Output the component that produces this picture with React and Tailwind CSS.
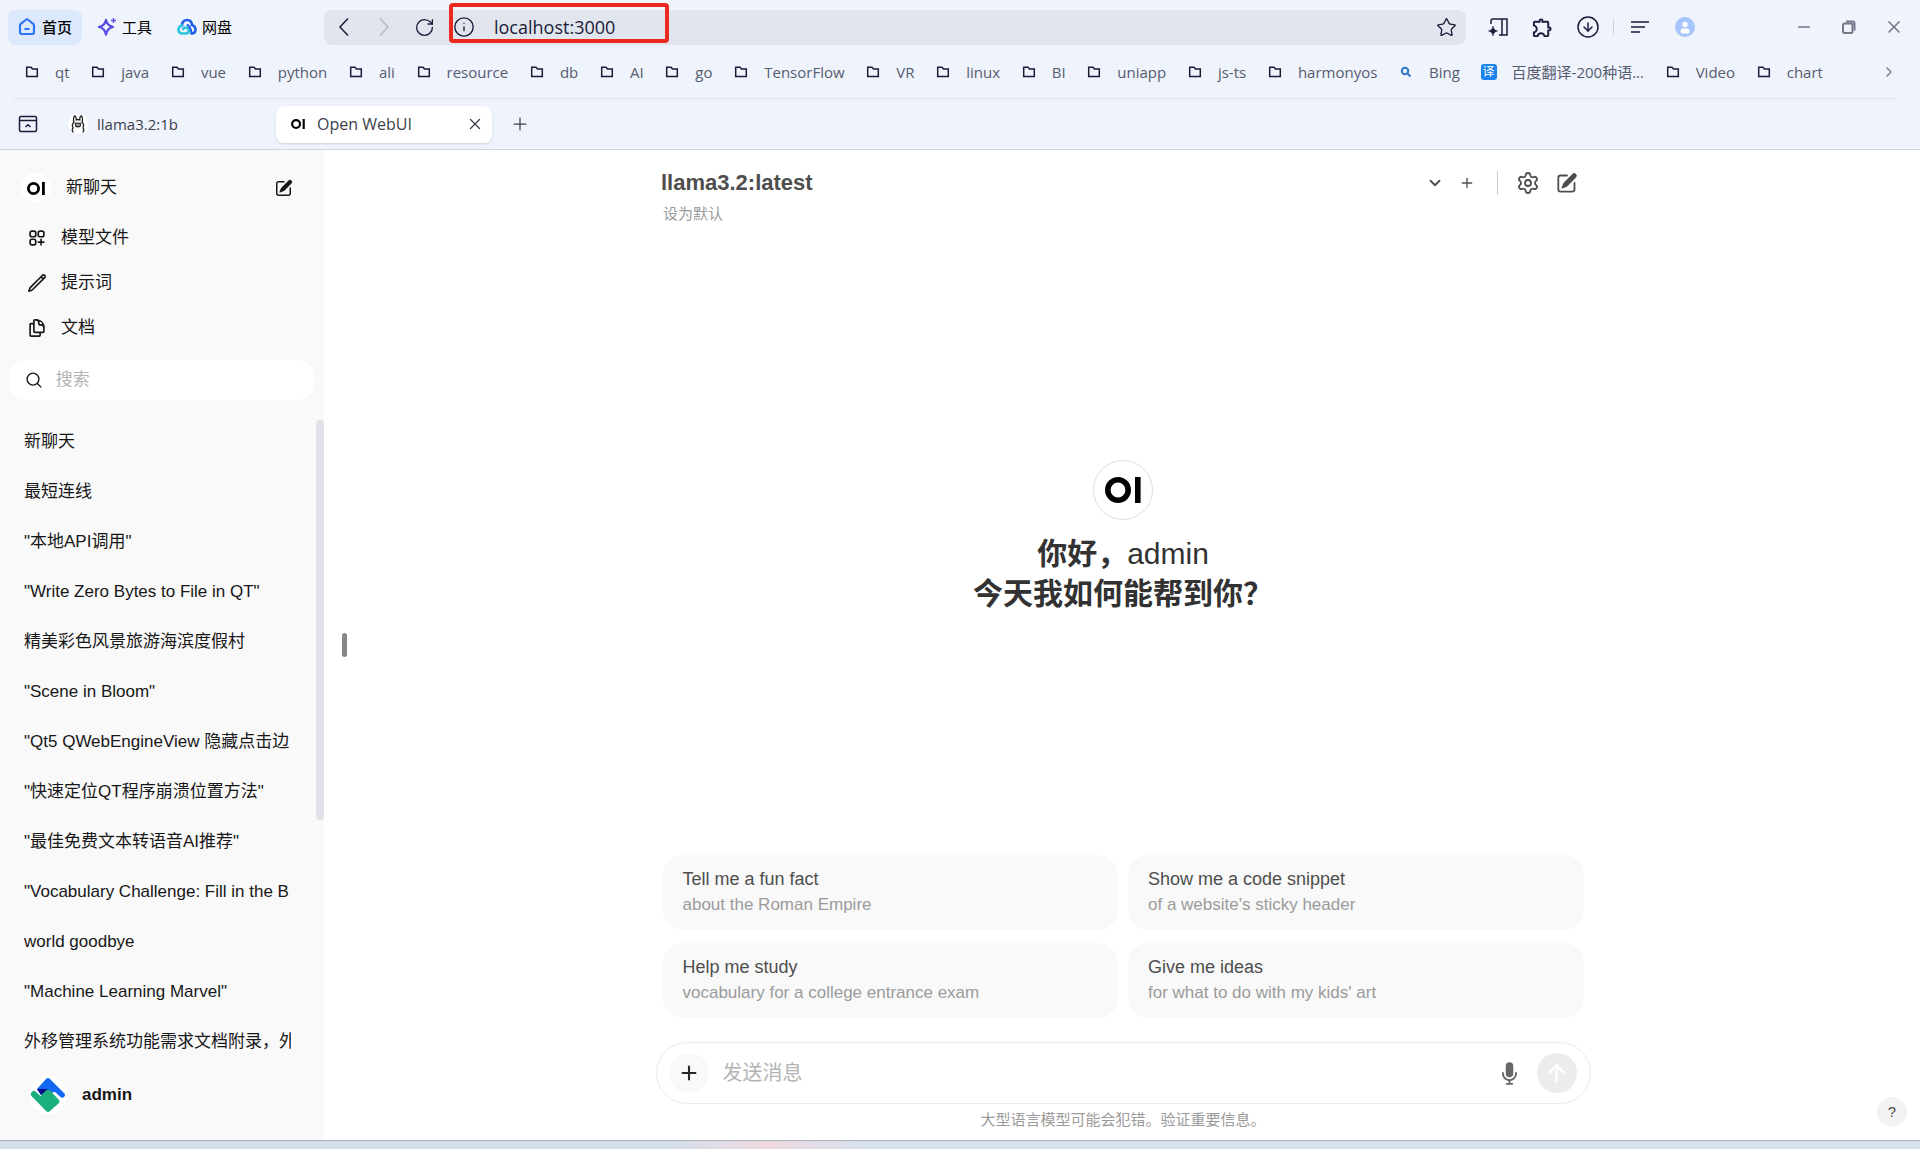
import { useState } from 'react';
import {
  ChevronDown, ChevronRight, CircleArrowDown, Info, Minus, Plus, RotateCw, Settings, Star, X,
} from 'lucide-react';
import { HiOutlineDocumentDuplicate, HiOutlinePencil, HiOutlineSquaresPlus } from 'react-icons/hi2';
import { MdOutlineExtension } from 'react-icons/md';

const bookmarks = [
  { label: 'qt' },
  { label: 'java' },
  { label: 'vue' },
  { label: 'python' },
  { label: 'ali' },
  { label: 'resource' },
  { label: 'db' },
  { label: 'AI' },
  { label: 'go' },
  { label: 'TensorFlow' },
  { label: 'VR' },
  { label: 'linux' },
  { label: 'BI' },
  { label: 'uniapp' },
  { label: 'js-ts' },
  { label: 'harmonyos' },
  { label: 'Bing', icon: 'search' },
  { label: '百度翻译-200种语...', icon: 'translate' },
  { label: 'Video' },
  { label: 'chart' },
];

const navItems = [
  { label: '模型文件', Icon: HiOutlineSquaresPlus },
  { label: '提示词', Icon: HiOutlinePencil },
  { label: '文档', Icon: HiOutlineDocumentDuplicate },
];

const chats = [
  '新聊天',
  '最短连线',
  '"本地API调用"',
  '"Write Zero Bytes to File in QT"',
  '精美彩色风景旅游海滨度假村',
  '"Scene in Bloom"',
  '"Qt5 QWebEngineView 隐藏点击边',
  '"快速定位QT程序崩溃位置方法"',
  '"最佳免费文本转语音AI推荐"',
  '"Vocabulary Challenge: Fill in the B',
  'world goodbye',
  '"Machine Learning Marvel"',
  '外移管理系统功能需求文档附录，外',
];

const suggestions = [
  { title: 'Tell me a fun fact', text: 'about the Roman Empire' },
  { title: 'Show me a code snippet', text: "of a website's sticky header" },
  { title: 'Help me study', text: 'vocabulary for a college entrance exam' },
  { title: 'Give me ideas', text: "for what to do with my kids' art" },
];

function LogoMark({ className }) {
  return (
    <svg viewBox="0 0 36 26" className={className} aria-hidden="true">
      <circle cx="13" cy="13" r="10.2" fill="none" stroke="#000" strokeWidth="5.6" />
      <rect x="30" y="0" width="5.6" height="26" fill="#000" />
    </svg>
  );
}

function EditIcon({ className }) {
  return (
    <svg viewBox="0 0 20 20" fill="currentColor" className={className} aria-hidden="true">
      <path d="m5.433 13.917 1.262-3.155A4 4 0 0 1 7.58 9.42l6.92-6.918a2.121 2.121 0 0 1 3 3l-6.92 6.918c-.383.383-.84.685-1.343.886l-3.154 1.262a.5.5 0 0 1-.65-.65Z" />
      <path d="M3.5 5.75c0-.69.56-1.25 1.25-1.25H10A.75.75 0 0 0 10 3H4.75A2.75 2.75 0 0 0 2 5.75v9.5A2.75 2.75 0 0 0 4.75 18h9.5A2.75 2.75 0 0 0 17 15.25V10a.75.75 0 0 0-1.5 0v5.25c0 .69-.56 1.25-1.25 1.25h-9.5c-.69 0-1.25-.56-1.25-1.25v-9.5Z" />
    </svg>
  );
}

function HomeIcon() {
  return (
    <svg viewBox="0 0 18 18" className="size-[18px]" aria-hidden="true">
      <path d="M7.6 2 2.8 5.8A2 2 0 0 0 2 7.4V14a2 2 0 0 0 2 2h10a2 2 0 0 0 2-2V7.4a2 2 0 0 0-.8-1.6L10.4 2a2.2 2.2 0 0 0-2.8 0Z" fill="none" stroke="#2f74f5" strokeWidth="2.2" />
      <path d="M6.5 11h5" stroke="#2f74f5" strokeWidth="2" />
    </svg>
  );
}

function SparkIcon() {
  return (
    <svg viewBox="0 0 20 20" className="size-5" aria-hidden="true">
      <path d="M9 3c.8 4 2.5 6 7 7-4.5 1-6.2 3-7 7.5C8.2 13 6.5 11 2 10c4.500-1 6.200-3 7-7Z" fill="none" stroke="#5a4ce0" strokeWidth="2.3" strokeLinejoin="round" />
      <path d="M16.5 1v5M14 3.5h5" stroke="#5a4ce0" strokeWidth="1.3" />
    </svg>
  );
}

function CloudIcon() {
  return (
    <svg viewBox="0 0 20 20" className="size-5" fill="none" strokeWidth="2.6" strokeLinecap="round" aria-hidden="true">
      <path d="M5 8.500C5 5 7.200 3 10 3s4.800 2 5 5c2.300.8 3.500 2.500 3.500 4.500 0 2.400-1.700 4-4 4" stroke="#2260ea" />
      <path d="M5 8.500c-2.200.6-3.500 2-3.500 4.200 0 2.300 1.700 3.800 4 3.800h3c2 0 3.300-1.300 3.300-3s-1.200-3-3-3c-1.300 0-2.200.6-2.700 1.600" stroke="#2bc4dc" />
      <path d="M10.500 8c2.200 1.200 3.500 3.300 4 8.500" stroke="#2260ea" strokeWidth="2" />
    </svg>
  );
}

function FolderIcon() {
  return (
    <svg viewBox="0 0 16 16" className="size-4" fill="none" stroke="#1b1b3a" strokeWidth="1.5" aria-hidden="true">
      <path d="M2.7 12.5V3.2H7l1.5 1.8h4.8v7.5Z" />
    </svg>
  );
}

function BookmarkIcon({ icon }) {
  if (icon === 'search') {
    return (
      <svg viewBox="0 0 16 16" className="size-4" fill="none" stroke="#2f78c8" strokeWidth="2" aria-hidden="true">
        <circle cx="7" cy="7" r="3.2" />
        <path d="m9.5 9.5 3 3" />
      </svg>
    );
  }
  if (icon === 'translate') {
    return (
      <span className="flex size-4 items-center justify-center rounded-[3px] bg-[#1a83ee] text-[12px] leading-4 text-white">
        译
      </span>
    );
  }
  return <FolderIcon />;
}

function LlamaIcon() {
  return (
    <svg viewBox="0 0 20 20" className="size-5" aria-hidden="true">
      <circle cx="10" cy="10" r="10" fill="#fff" />
      <g fill="none" stroke="#222" strokeWidth="1.3" strokeLinecap="round">
        <path d="M5 18c-1-1.500-1-3 0-4.200-1-2-.7-4 .8-5.300C5.200 5.500 5.600 2 6.700 2S8.200 4 8.300 6c1-.6 2.400-.6 3.400 0 .1-2 .5-4 1.600-4s1.500 3.500.9 6.500c1.500 1.300 1.800 3.300.8 5.300 1 1.200 1 2.700 0 4.200" />
        <ellipse cx="10" cy="11" rx="2.4" ry="1.8" />
        <path d="M7.2 9v.1M12.8 9v.1M10 10.8v.5" />
      </g>
    </svg>
  );
}

function AvatarLogo() {
  return (
    <svg viewBox="0 0 38 38" className="size-[38px]" aria-hidden="true">
      <circle cx="19" cy="19" r="19" fill="#fff" />
      <path d="M8 13 17 3a3 3 0 0 1 4 0l14 14a2.500 2.500 0 0 1-3.500 4L26 16l-5 1-9 2Z" fill="#1268f3" />
      <path d="M8 13h12l-8 6Z" fill="#0a0a8c" />
      <path d="M3 16a2 2 0 0 1 3.500-.5L11.500 20 17 14.500a3 3 0 0 1 4 0L30 24a2.500 2.500 0 0 1 0 3L21 35a3 3 0 0 1-4 0L2.500 20A2.500 2.500 0 0 1 3 16Z" fill="#1ab07c" />
    </svg>
  );
}

function ToolButton({ label, children }) {
  return (
    <button type="button" aria-label={label} className="flex h-9 w-[45px] shrink-0 items-center justify-center text-[#1b1b3a]">
      {children}
    </button>
  );
}

function BrowserToolbar() {
  const [url, setUrl] = useState('localhost:3000');

  return (
    <div className="flex h-[54px] items-center">
      <div className="flex w-[324px] shrink-0 gap-[5px] pl-2 text-[15px] leading-5 text-black">
        <button type="button" className="flex h-[35px] items-center gap-[6px] rounded-lg bg-[#dce8fb] px-[10px] font-medium">
          <HomeIcon /> 首页
        </button>
        <button type="button" className="flex h-[35px] items-center gap-[5px] px-[10px]">
          <SparkIcon /> 工具
        </button>
        <button type="button" className="flex h-[35px] items-center gap-[5px] px-[10px]">
          <CloudIcon /> 网盘
        </button>
      </div>

      <div className="relative flex h-[35px] flex-1 items-center rounded-lg bg-[#e1e5ed] text-[#1b1b3a]">
        <button type="button" aria-label="Back" className="flex w-10 justify-center">
          <svg viewBox="0 0 12 20" className="h-5 w-3" fill="none" stroke="currentColor" strokeWidth="1.5"><path d="M10 1.5 2 10l8 8.5" /></svg>
        </button>
        <button type="button" aria-label="Forward" className="flex w-10 justify-center text-[#b4b8c6]">
          <svg viewBox="0 0 12 20" className="h-5 w-3" fill="none" stroke="currentColor" strokeWidth="1.5"><path d="m2 1.500 8 8.500-8 8.500" /></svg>
        </button>
        <button type="button" aria-label="Reload" className="flex w-10 justify-center">
          <RotateCw className="size-[21px]" strokeWidth={1.5} />
        </button>
        <button type="button" aria-label="Site information" className="flex w-10 justify-center">
          <Info className="size-[22px]" strokeWidth={1.5} />
        </button>
        <input
          aria-label="Address"
          value={url}
          onChange={(e) => setUrl(e.target.value)}
          className="min-w-0 flex-1 pl-[10px] text-[18px] leading-6 outline-none"
        />
        <button type="button" aria-label="Add bookmark" className="flex w-10 justify-center">
          <Star className="size-[21px]" strokeWidth={1.5} />
        </button>
        <div className="pointer-events-none absolute top-[-7px] left-[125px] h-10 w-[220px] rounded-sm border-4 border-[#ea2a1e]" />
      </div>

      <div className="flex w-[454px] shrink-0 items-center pr-1 pl-[9px]">
        <ToolButton label="Assistant panel">
          <svg viewBox="0 0 22 22" className="size-[22px]" fill="none" stroke="currentColor" strokeWidth="1.5">
            <path d="M4 8V4.500A1.500 1.500 0 0 1 5.500 3H20v16h-8M15 3v16" />
            <path d="M6 10c.6 3 1.500 4.300 4.500 5-3 .7-3.900 2-4.500 5-.6-3-1.500-4.300-4.500-5 3-.7 3.900-2 4.500-5Z" fill="currentColor" strokeWidth="0.5" />
          </svg>
        </ToolButton>
        <ToolButton label="Extensions">
          <MdOutlineExtension className="size-[23px]" />
        </ToolButton>
        <ToolButton label="Downloads">
          <CircleArrowDown className="size-6" strokeWidth={1.5} />
        </ToolButton>
        <span className="mx-[3px] h-4 w-px bg-[#ccd1dd]" />
        <ToolButton label="Menu">
          <svg viewBox="0 0 20 14" className="h-[14px] w-5" stroke="currentColor" strokeWidth="1.6"><path d="M1 2h18M1 7h14M1 12h9" /></svg>
        </ToolButton>
        <ToolButton label="Profile">
          <svg viewBox="0 0 20 20" className="size-5">
            <circle cx="10" cy="10" r="10" fill="#a5c5fb" />
            <circle cx="10" cy="7.5" r="2.7" fill="#fff" />
            <rect x="5.5" y="11.5" width="9" height="5" rx="2.5" fill="#fff" />
          </svg>
        </ToolButton>
        <div className="ml-auto flex *:text-[#74778a]">
          <ToolButton label="Minimize"><Minus className="size-[18px]" strokeWidth={2.3} /></ToolButton>
          <ToolButton label="Restore">
            <svg viewBox="0 0 14 14" className="size-[14px]" fill="none" stroke="currentColor" strokeWidth="2">
              <rect x="1" y="3.5" width="9.5" height="9.5" rx="1.5" />
              <path d="M4 1.500h6.500a2 2 0 0 1 2 2v7" />
            </svg>
          </ToolButton>
          <ToolButton label="Close"><X className="size-5" strokeWidth={2} /></ToolButton>
        </div>
      </div>
    </div>
  );
}

function BookmarksBar() {
  return (
    <nav className="flex h-[35px] items-center pr-[23px] pl-6">
      <div className="mr-[58px] flex flex-1 justify-between">
        {bookmarks.map(({ label, icon }) => (
          <a key={label} href="#" className="flex items-center gap-[15px] text-[15px] leading-5 whitespace-nowrap text-[#575c70]">
            <BookmarkIcon icon={icon} />
            {label}
          </a>
        ))}
      </div>
      <button type="button" aria-label="More bookmarks" className="text-[#74778a]">
        <ChevronRight className="size-4" strokeWidth={2} />
      </button>
    </nav>
  );
}

function TabStrip() {
  return (
    <div className="flex h-[50px] items-center text-[16px] leading-5 text-[#3c3f4a]">
      <button type="button" aria-label="Tab list" className="flex w-14 justify-center text-[#1b1b3a]">
        <svg viewBox="0 0 20 18" className="h-[18px] w-5" fill="none" stroke="currentColor" strokeWidth="1.5">
          <rect x="1.5" y="1.5" width="17" height="15" rx="1.5" />
          <path d="M1.500 5.500h17M7.500 12 10 9.800l2.500 2.200" />
        </svg>
      </button>
      <button type="button" className="flex w-[220px] items-center gap-[9px] pl-3 text-[15px]">
        <LlamaIcon /> llama3.2:1b
      </button>
      <div className="flex h-[37px] w-[216px] items-center rounded-lg bg-white pr-2 pl-[15px] shadow-sm">
        <button type="button" className="flex flex-1 items-center gap-3">
          <LogoMark className="h-[10px] w-[14px]" /> Open WebUI
        </button>
        <button type="button" aria-label="Close tab"><X className="size-[18px]" strokeWidth={1.7} /></button>
      </div>
      <button type="button" aria-label="New tab" className="flex w-14 justify-center">
        <Plus className="size-5" strokeWidth={1.5} />
      </button>
    </div>
  );
}

function Sidebar() {
  return (
    <aside className="flex w-[324px] shrink-0 flex-col bg-[#f9f9f9] text-[17px] text-[#171717]">
      <a href="#" className="mt-[14px] flex h-[48px] items-center pr-[30px] pl-[21px]">
        <span className="flex size-[30px] items-center justify-center rounded-full bg-white">
          <LogoMark className="h-[13px] w-[18px]" />
        </span>
        <span className="flex-1 pl-[15px]">新聊天</span>
        <EditIcon className="size-5" />
      </a>
      <nav className="mt-[3px]">
        {navItems.map(({ label, Icon }) => (
          <a key={label} href="#" className="flex h-[45px] items-center gap-[14px] pl-[27px]">
            <Icon className="size-5" strokeWidth={2} />
            {label}
          </a>
        ))}
      </nav>

      <label className="mr-[10px] ml-[9px] mt-[10px] flex h-10 shrink-0 items-center gap-[13px] rounded-2xl bg-white px-4">
        <svg viewBox="0 0 20 20" className="size-5" fill="none" stroke="currentColor" strokeWidth="1.5" strokeLinecap="round" aria-hidden="true">
          <circle cx="9" cy="9" r="6.7" />
          <path d="m14 14 4 4" />
        </svg>
        <input placeholder="搜索" aria-label="搜索" className="w-full outline-none placeholder:text-[#b4b4b4]" />
      </label>

      <div className="mt-5 flex min-h-0 flex-1">
        <ul className="h-full min-w-0 flex-1 overflow-hidden">
          {chats.map((chat) => (
            <li key={chat} className="h-[50px] pt-[10px] pr-[25px] pl-6">
              <a href="#" className="block overflow-hidden leading-6 whitespace-nowrap">{chat}</a>
            </li>
          ))}
        </ul>
        <div className="h-[61%] w-2 rounded-full bg-[#e0e1ea]" />
      </div>

      <button type="button" className="mb-[26px] flex h-[38px] shrink-0 items-center gap-[15px] pl-[29px] font-bold">
        <AvatarLogo /> admin
      </button>
    </aside>
  );
}

function ChatHeader() {
  return (
    <header className="mx-auto w-full max-w-[924px] pt-[19px]">
      <div className="flex h-7 items-center pr-[6px] text-[#4e4e4e]">
        <button type="button" className="flex flex-1 items-center justify-between text-[22px] leading-7 font-bold">
          llama3.2:latest
          <ChevronDown className="size-[18px]" strokeWidth={2.5} />
        </button>
        <button type="button" aria-label="Add model" className="ml-[15px]"><Plus className="size-4" strokeWidth={2} /></button>
        <span className="mr-[18px] ml-[22px] h-6 w-px bg-[#cdcdcd]" />
        <button type="button" aria-label="Settings"><Settings className="size-6" strokeWidth={1.8} /></button>
        <button type="button" aria-label="New chat" className="ml-[15px]"><EditIcon className="size-6" /></button>
      </div>
      <button type="button" className="mt-[7px] block pl-[2px] text-[15px] leading-5 text-[#9b9b9b]">设为默认</button>
    </header>
  );
}

function Composer() {
  const [message, setMessage] = useState('');

  return (
    <form className="mt-6 flex h-[62px] items-center rounded-full border border-[#ececec] pr-[13px] pl-3" onSubmit={(e) => e.preventDefault()}>
      <button type="button" aria-label="Attach" className="flex size-10 items-center justify-center rounded-full bg-[#f9f9f9] text-[#262626]">
        <Plus className="size-[22px]" strokeWidth={2.3} />
      </button>
      <input
        value={message}
        onChange={(e) => setMessage(e.target.value)}
        placeholder="发送消息"
        aria-label="发送消息"
        className="min-w-0 flex-1 pl-[14px] text-[20px] leading-7 outline-none placeholder:text-[#b4b4b4]"
      />
      <button type="button" aria-label="Voice input" className="text-[#676767]">
        <svg viewBox="0 0 20 20" fill="currentColor" className="size-[25px]">
          <path d="M7 4a3 3 0 0 1 6 0v6a3 3 0 1 1-6 0V4Z" />
          <path d="M5.5 9.643a.75.75 0 0 0-1.5 0V10c0 3.06 2.29 5.585 5.25 5.954V17.5h-1.5a.75.75 0 0 0 0 1.5h4.5a.75.75 0 0 0 0-1.5h-1.5v-1.546A6.001 6.001 0 0 0 16 10v-.357a.75.75 0 0 0-1.5 0V10a4.5 4.5 0 0 1-9 0v-.357Z" />
        </svg>
      </button>
      <button type="submit" aria-label="Send" className="ml-[15px] flex size-10 items-center justify-center rounded-full bg-[#ececec] text-white">
        <svg viewBox="0 0 16 16" fill="currentColor" className="size-[25px]">
          <path fillRule="evenodd" clipRule="evenodd" d="M8 14a.75.75 0 0 1-.75-.75V4.56L4.03 7.78a.75.75 0 0 1-1.06-1.06l4.5-4.5a.75.75 0 0 1 1.06 0l4.5 4.5a.75.75 0 0 1-1.06 1.06L8.75 4.56v8.69A.75.75 0 0 1 8 14Z" />
        </svg>
      </button>
    </form>
  );
}

function Chat() {
  return (
    <main className="relative flex flex-1 flex-col bg-white pl-[2px]">
      <ChatHeader />

      <section className="flex flex-1 flex-col items-center justify-center pb-[6px] text-center text-[30px] leading-10 text-[#323232]">
        <span className="mb-[14px] flex size-[60px] items-center justify-center rounded-full border border-[#dedede]">
          <LogoMark className="h-[26px] w-9" />
        </span>
        <h1><span className="font-bold">你好，</span>admin</h1>
        <p className="font-bold">今天我如何能帮到你？</p>
      </section>

      <div className="mx-auto w-full max-w-[935px]">
        <div className="mx-[7px] grid grid-cols-2 gap-x-[10px] gap-y-[13px]">
          {suggestions.map(({ title, text }) => (
            <button key={title} type="button" className="rounded-[20px] bg-[#f9f9f9] px-5 pt-3 pb-[13px] text-left leading-[25px]">
              <span className="block text-[18px] text-[#4e4e4e]">{title}</span>
              <span className="block text-[17px] text-[#9b9b9b]">{text}</span>
            </button>
          ))}
        </div>
        <Composer />
        <p className="mt-[6px] mb-[10px] text-center text-[15px] leading-5 text-[#9b9b9b]">大型语言模型可能会犯错。验证重要信息。</p>
      </div>

      {/* resize handle */}
      <div className="absolute top-1/2 left-[18px] h-6 w-[5px] -translate-y-1/2 rounded-full bg-[#868686]" />
      <button type="button" aria-label="Help" className="absolute right-[13px] bottom-[13px] size-[30px] rounded-full bg-[#f3f3f3] text-[15px] text-[#4e4e4e]">?</button>
    </main>
  );
}

export default function App() {
  return (
    <div className="flex h-screen flex-col font-['Liberation_Sans','Noto_Sans_CJK_SC',sans-serif]">
      <div className="border-b border-[#d0d5e0] bg-[#eef3fc] font-['Open_Sans','Noto_Sans_CJK_SC',sans-serif]">
        <BrowserToolbar />
        <BookmarksBar />
        <div className="mt-[9px] mr-6 ml-[13px] border-t border-[#e0e4ee]" />
        <TabStrip />
      </div>

      <div className="flex min-h-0 flex-1">
        <Sidebar />
        <Chat />
      </div>

      {/* taskbar edge */}
      <div className="h-[9px] shrink-0 border-t border-[#a8afbb] bg-linear-to-r from-[#d5dfeb] from-35% via-[#eed8df] via-40% to-[#d7e1ee] to-45%" />
    </div>
  );
}
